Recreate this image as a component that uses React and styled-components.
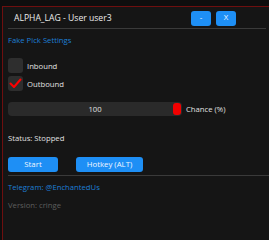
import styled, { createGlobalStyle } from "styled-components";

const GlobalStyle = createGlobalStyle`
  html, body {
    margin: 0;
    padding: 0;
    background: #0e0e0e;
    overflow: hidden;
  }
  body {
    font-family: "Open Sans", "Noto Sans", sans-serif;
  }
`;

const Window = styled.div`
  margin: 6px 0 0 2px;
  width: 280px;
  height: 240px;
  background: #151515;
  border-left: 1px solid #6e0f0f;
  border-top: 1px solid #6e0f0f;
  padding: 0 5px;
  box-sizing: border-box;
  color: #e0e0e0;
  font-size: 7.7px;
`;

const TitleBar = styled.div`
  display: flex;
  align-items: center;
  height: 22px;
  padding: 1px 30px 0 6px;
  border-bottom: 1px solid #3a3a3a;
  width: 258px;
  box-sizing: border-box;
`;

const Title = styled.div`
  flex: 1;
  font-size: 8.6px;
  color: #ececec;
`;

const Button = styled.button`
  border: none;
  border-radius: 3px;
  background: #1e8ff5;
  color: #f0f6ff;
  font-family: inherit;
  font-size: 7.8px;
  height: 15px;
  width: ${(p) => p.$w};
  padding: 0;
  cursor: pointer;
  line-height: 1;
`;

const TitleButtons = styled.div`
  display: flex;
  gap: 5px;
`;

const Link = styled.div`
  color: #1d7fd6;
  margin-top: ${(p) => p.$mt || "0"};
  height: 10px;
  line-height: 10px;
`;

const CheckList = styled.div`
  display: flex;
  flex-direction: column;
  gap: 3px;
  margin-top: 13px;
`;

const CheckRow = styled.label`
  display: flex;
  align-items: center;
  gap: 4px;
`;

const Box = styled.span`
  width: 15px;
  height: 15px;
  border-radius: 3px;
  background: #2e2e2e;
  display: flex;
  align-items: center;
  justify-content: center;
`;

const SliderRow = styled.div`
  display: flex;
  align-items: center;
  gap: 4px;
  margin-top: 11px;
`;

const Track = styled.div`
  position: relative;
  width: 174px;
  height: 14px;
  border-radius: 4px;
  background: #2a2a2a;
  display: flex;
  align-items: center;
  justify-content: center;
`;

const Handle = styled.span`
  position: absolute;
  right: 1px;
  top: 1px;
  width: 8px;
  height: 12px;
  border-radius: 3px;
  background: #f20000;
`;

const Status = styled.div`
  margin-top: 17px;
  height: 10px;
  line-height: 10px;
`;

const ButtonRow = styled.div`
  display: flex;
  gap: 18px;
  margin-top: 14px;
  padding-bottom: 3px;
  border-bottom: 1px solid #3a3a3a;
`;

const Version = styled.div`
  color: #5e5e5e;
  margin-top: 8px;
  height: 10px;
  line-height: 10px;
`;

function Check() {
  return (
    <svg width="13" height="13" viewBox="0 0 13 13">
      <path d="M1.5 6.5 L5 10 L11.5 2.5" fill="none" stroke="#f00" strokeWidth="2" strokeLinecap="round" strokeLinejoin="round" />
    </svg>
  );
}

export default function App() {
  return (
    <>
      <GlobalStyle />
      <Window>
        <TitleBar>
          <Title>ALPHA_LAG - User user3</Title>
          <TitleButtons>
            <Button $w="20px">-</Button>
            <Button $w="20px">X</Button>
          </TitleButtons>
        </TitleBar>
        <Link $mt="6px">Fake Pick Settings</Link>
        <CheckList>
          <CheckRow>
            <Box />
            Inbound
          </CheckRow>
          <CheckRow>
            <Box>
              <Check />
            </Box>
            Outbound
          </CheckRow>
        </CheckList>
        <SliderRow>
          <Track>
            100
            <Handle />
          </Track>
          Chance (%)
        </SliderRow>
        <Status>Status: Stopped</Status>
        <ButtonRow>
          <Button $w="50px">Start</Button>
          <Button $w="67px">Hotkey (ALT)</Button>
        </ButtonRow>
        <Link $mt="6px">Telegram: @EnchantedUs</Link>
        <Version>Version: cringe</Version>
      </Window>
    </>
  );
}
